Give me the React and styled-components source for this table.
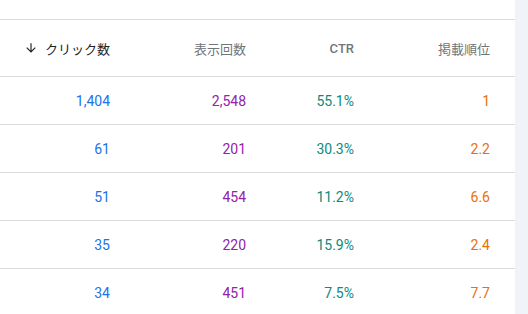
import styled, { createGlobalStyle } from "styled-components";

const GlobalStyle = createGlobalStyle`
  html, body {
    margin: 0;
    padding: 0;
    background: #f0f4f9;
  }
  body {
    font-family: Roboto, "Noto Sans CJK JP", sans-serif;
  }
  * {
    box-sizing: border-box;
  }
`;

const Page = styled.div`
  display: flex;
  width: 528px;
  height: 314px;
  overflow: hidden;
  background: #f0f4f9;
`;

const Panel = styled.div`
  flex: none;
  width: 515px;
  background: #fff;
  padding-top: 19px;
`;

const Table = styled.div`
  border-top: 1px solid #dadce0;
`;

const Row = styled.div`
  display: grid;
  grid-template-columns: 110px 136px 108px 136px;
  height: ${({ $head }) => ($head ? "57px" : "48px")};
  padding-right: 25px;
  border-bottom: 1px solid #dadce0;
`;

const HeadCell = styled.div`
  display: flex;
  align-items: center;
  justify-content: flex-end;
  font-size: 13px;
  color: ${({ $active }) => ($active ? "#202124" : "#70757a")};
  font-weight: ${({ $latin }) => ($latin ? 500 : 400)};
`;

const Cell = styled.div`
  display: flex;
  align-items: center;
  justify-content: flex-end;
  font-size: 14px;
  color: ${({ $color }) => $color};
`;

const SortIcon = styled.svg`
  width: 14px;
  height: 14px;
  margin-right: 7px;
  fill: #202124;
`;

const colors = ["#1a73e8", "#8e24aa", "#0d8a7a", "#e8710a"];

const rows = [
  ["1,404", "2,548", "55.1%", "1"],
  ["61", "201", "30.3%", "2.2"],
  ["51", "454", "11.2%", "6.6"],
  ["35", "220", "15.9%", "2.4"],
  ["34", "451", "7.5%", "7.7"],
];

export default function App() {
  return (
    <>
      <GlobalStyle />
      <Page>
        <Panel>
          <Table>
            <Row $head>
              <HeadCell $active>
                <SortIcon viewBox="0 0 24 24">
                  <path d="M20 12l-1.41-1.41L13 16.17V4h-2v12.17l-5.58-5.59L4 12l8 8 8-8z" />
                </SortIcon>
                クリック数
              </HeadCell>
              <HeadCell>表示回数</HeadCell>
              <HeadCell $latin>CTR</HeadCell>
              <HeadCell>掲載順位</HeadCell>
            </Row>
            {rows.map((row) => (
              <Row key={row[0]}>
                {row.map((value, i) => (
                  <Cell key={i} $color={colors[i]}>
                    {value}
                  </Cell>
                ))}
              </Row>
            ))}
          </Table>
        </Panel>
      </Page>
    </>
  );
}
